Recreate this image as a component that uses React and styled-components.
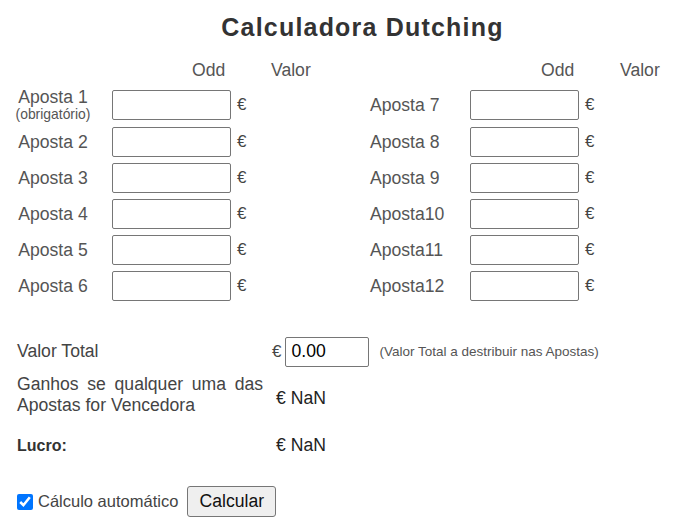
import styled, { createGlobalStyle } from 'styled-components';

const GlobalStyle = createGlobalStyle`
  body {
    margin: 0;
    background: #fff;
    font-family: "Liberation Sans", Arial, sans-serif;
  }
`

const Page = styled.div`
  width: 684px;
  padding-top: 12px;
  font-size: 17.6px;
  color: #555;
`

const Title = styled.h1`
  margin: 0 0 18px;
  padding-left: 41px;
  height: 30px;
  line-height: 30px;
  font-size: 25px;
  font-weight: bold;
  letter-spacing: 1.2px;
  text-align: center;
  color: #333;
`

const HeadRow = styled.div`
  display: flex;
  padding-left: 192px;
  height: 20px;
  line-height: 20px;
  margin-bottom: 5px;
`

const HeadCell = styled.span`
  width: ${p => p.$w}px;
  flex: none;
`

const BetRow = styled.div`
  display: flex;
  align-items: center;
  height: ${p => (p.$tall ? 39 : 36)}px;
  padding-left: 14px;
`

const BetLabel = styled.div`
  flex: none;
  width: ${p => p.$w}px;
  margin-right: ${p => p.$mr}px;
  text-align: ${p => p.$align};
  line-height: 20px;
  white-space: nowrap;
`

const SubNote = styled.div`
  font-size: 13.9px;
  line-height: 15px;
`

const InputCell = styled.div`
  flex: none;
  display: flex;
  align-items: center;
  gap: 6px;
  width: ${p => p.$w}px;
`

const OddInput = styled.input`
  box-sizing: border-box;
  width: ${p => p.$w}px;
  height: 30px;
  margin: 0;
  border: 1px solid #767676;
  border-radius: 2px;
  background: #fff;
  font: inherit;
  color: #000;
  padding: 0 4px;
`

const Euro = styled.span`
  color: #444;
  font-size: 17px;
`

const Summary = styled.div`
  margin-top: 30px;
  padding-left: 17px;
  color: #444;
`

const SumRow = styled.div`
  display: flex;
  align-items: center;
  min-height: ${p => p.$h}px;
  margin-top: ${p => p.$mt}px;
`

const SumLabel = styled.div`
  flex: none;
  width: 246px;
  margin-right: 9px;
  line-height: 21px;
  text-align: justify;
  font-size: ${p => (p.$bold ? '16px' : 'inherit')};
  font-weight: ${p => (p.$bold ? 'bold' : 'normal')};
  color: ${p => (p.$bold ? '#333' : '#444')};
`

const SumValue = styled.div`
  display: flex;
  align-items: center;
  gap: 4px;
  padding-left: ${p => p.$pl || 0}px;
  padding-top: ${p => p.$pt || 0}px;
  color: #222;
  white-space: nowrap;
`

const TotalInput = styled(OddInput)`
  width: 84px;
  padding: 0 5px;
`

const Hint = styled.span`
  margin-left: 6px;
  font-size: 13.5px;
  color: #555;
`

const ActionRow = styled.div`
  display: flex;
  align-items: center;
  margin-top: 30px;
  padding-left: 17px;
`

const Check = styled.input`
  width: 16px;
  height: 16px;
  margin: 0 5px 0 0;
  accent-color: #0075ff;
`

const CheckLabel = styled.label`
  display: flex;
  align-items: center;
  font-size: 16.5px;
  color: #444;
  margin-right: 9px;
`

const Button = styled.button`
  box-sizing: border-box;
  height: 31px;
  width: 89px;
  padding: 0;
  border: 1px solid #767676;
  border-radius: 3px;
  background: #efefef;
  color: #111;
  font: inherit;
  font-size: 17.6px;
`

const rows = [
  ['Aposta 1', 'Aposta 7'],
  ['Aposta 2', 'Aposta 8'],
  ['Aposta 3', 'Aposta 9'],
  ['Aposta 4', 'Aposta10'],
  ['Aposta 5', 'Aposta11'],
  ['Aposta 6', 'Aposta12'],
]

export default function App() {
  return (
    <>
      <GlobalStyle />
      <Page>
        <Title>Calculadora Dutching</Title>
        <HeadRow>
          <HeadCell $w={79}>Odd</HeadCell>
          <HeadCell $w={270}>Valor</HeadCell>
          <HeadCell $w={79}>Odd</HeadCell>
          <HeadCell $w={60}>Valor</HeadCell>
        </HeadRow>
        {rows.map(([l, r], i) => (
          <BetRow key={l} $tall={i === 0}>
            <BetLabel $w={78} $mr={20} $align="center">
              {l}
              {i === 0 && <SubNote>(obrigatório)</SubNote>}
            </BetLabel>
            <InputCell $w={258}>
              <OddInput $w={119} />
              <Euro>€</Euro>
            </InputCell>
            <BetLabel $w={100} $mr={0} $align="left">{r}</BetLabel>
            <InputCell $w={140}>
              <OddInput $w={109} />
              <Euro>€</Euro>
            </InputCell>
          </BetRow>
        ))}
        <Summary>
          <SumRow $h={35} $mt={0}>
            <SumLabel>Valor Total</SumLabel>
            <SumValue>
              <Euro>€</Euro>
              <TotalInput defaultValue="0.00" />
              <Hint>(Valor Total a destribuir nas Apostas)</Hint>
            </SumValue>
          </SumRow>
          <SumRow $h={42} $mt={5}>
            <SumLabel>Ganhos se qualquer uma das Apostas for Vencedora</SumLabel>
            <SumValue $pl={4} $pt={6}>€ NaN</SumValue>
          </SumRow>
          <SumRow $h={20} $mt={19}>
            <SumLabel $bold>Lucro:</SumLabel>
            <SumValue $pl={4}>€ NaN</SumValue>
          </SumRow>
        </Summary>
        <ActionRow>
          <CheckLabel>
            <Check type="checkbox" defaultChecked />
            Cálculo automático
          </CheckLabel>
          <Button>Calcular</Button>
        </ActionRow>
      </Page>
    </>
  )
}
